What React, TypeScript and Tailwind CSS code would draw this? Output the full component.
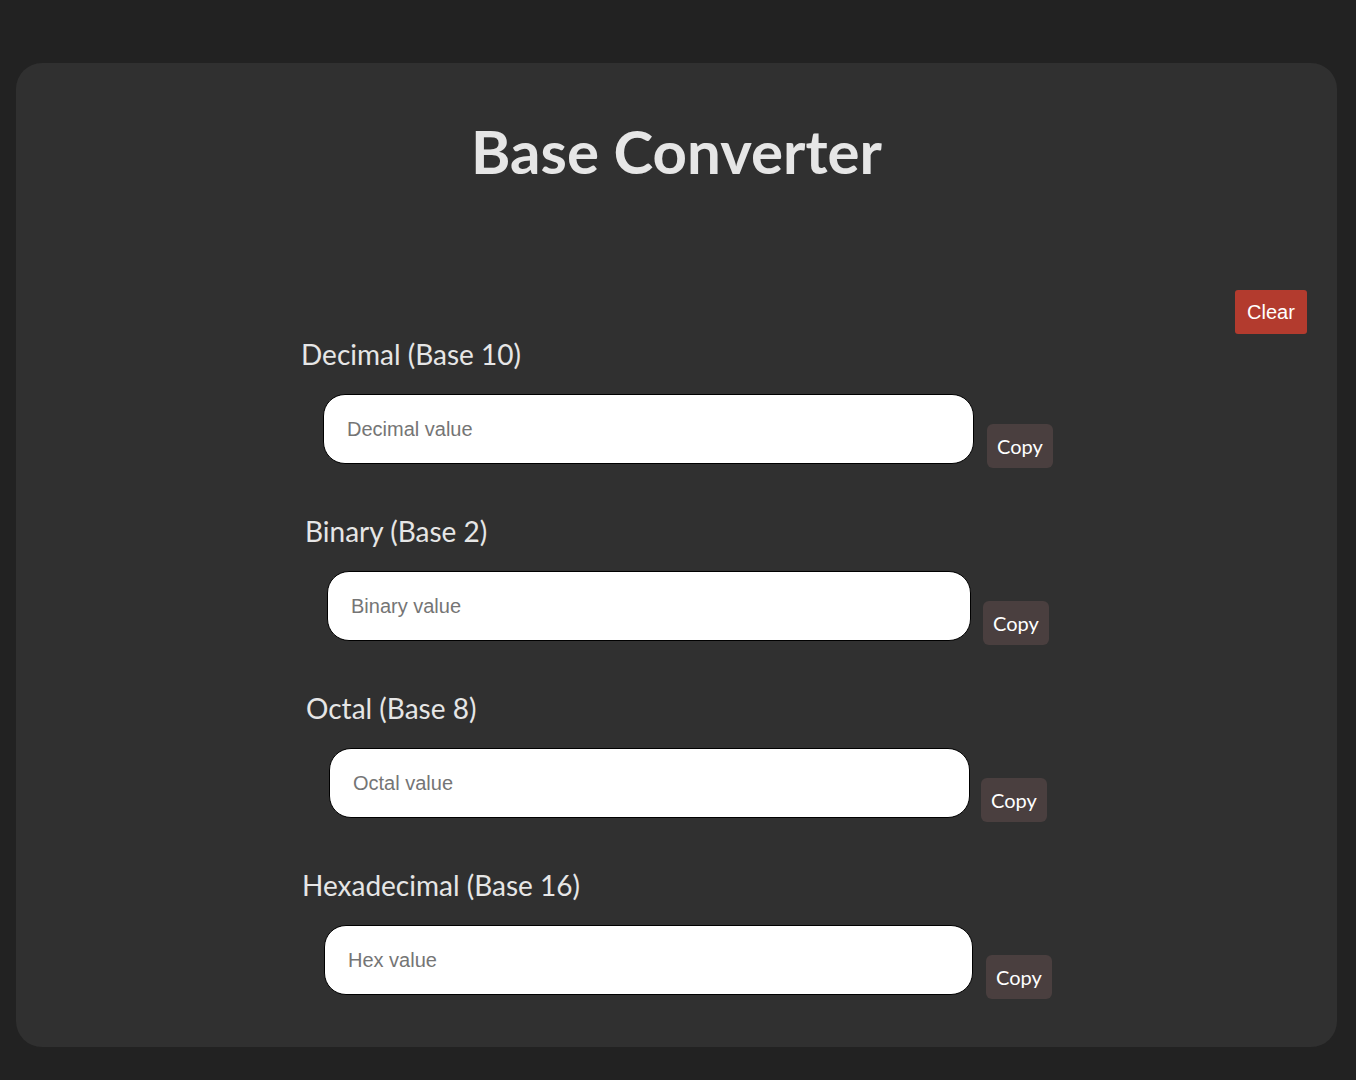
import { useState } from "react";

const fields = [
  { key: "dec", label: "Decimal (Base 10)", placeholder: "Decimal value", labelPad: "pl-[1px]", inputPad: "pl-[23px]", inputW: "w-[651px]", gap: "ml-[13px]" },
  { key: "bin", label: "Binary (Base 2)", placeholder: "Binary value", labelPad: "pl-[5px]", inputPad: "pl-[27px]", inputW: "w-[644px]", gap: "ml-[12px]" },
  { key: "oct", label: "Octal (Base 8)", placeholder: "Octal value", labelPad: "pl-[6px]", inputPad: "pl-[29px]", inputW: "w-[641px]", gap: "ml-[11px]" },
  { key: "hex", label: "Hexadecimal (Base 16)", placeholder: "Hex value", labelPad: "pl-[2px]", inputPad: "pl-[24px]", inputW: "w-[649px]", gap: "ml-[13px]" },
];

export default function App() {
  const [values, setValues] = useState<Record<string, string>>({ dec: "", bin: "", oct: "", hex: "" });

  const update = (key: string, value: string) => {
    setValues({ ...values, [key]: value });
  };

  const copy = (key: string) => {
    navigator.clipboard?.writeText(values[key]).catch(() => {});
  };

  return (
    <div className="min-h-[1080px] bg-[#222222] pt-[63px] pb-[33px] pl-[16px] pr-[19px] font-[family-name:Lato,'Liberation_Sans',sans-serif]">
      <div className="h-[984px] rounded-[26px] bg-[#303030] flex flex-col">
        {/* Title */}
        <h1 className="pt-[52px] text-center text-[60px] leading-[72px] font-bold text-[#e6e6e6]">
          Base Converter
        </h1>

        {/* Clear */}
        <div className="flex justify-end pr-[30px] mt-[103px]">
          <button
            onClick={() => setValues({ dec: "", bin: "", oct: "", hex: "" })}
            className="w-[72px] h-[44px] rounded-[3px] bg-[#b33b2e] text-white text-[20px] font-[family-name:'Liberation_Sans',Arial,sans-serif]"
          >
            Clear
          </button>
        </div>

        {/* Fields */}
        <div className="pl-[284px] flex flex-col">
          {fields.map((f, i) => (
            <div key={f.key} className={i === 0 ? "" : "mt-[43px]"}>
              <div className={`${f.labelPad} text-[28px] leading-[40px] text-[#e6e6e6]`}>{f.label}</div>
              <div className={`${f.inputPad} mt-[20px] flex items-start`}>
                <input
                  value={values[f.key]}
                  onChange={(e) => update(f.key, e.target.value)}
                  placeholder={f.placeholder}
                  className={`${f.inputW} h-[70px] rounded-[22px] border border-black bg-white px-[23px] text-[20px] text-[#222] placeholder:text-[#757575] outline-none font-[family-name:'Liberation_Sans',Arial,sans-serif]`}
                />
                <button
                  onClick={() => copy(f.key)}
                  className={`${f.gap} mt-[30px] w-[66px] h-[44px] rounded-[6px] bg-[#4a3f3f] text-white text-[20px]`}
                >
                  Copy
                </button>
              </div>
            </div>
          ))}
        </div>
      </div>
    </div>
  );
}
